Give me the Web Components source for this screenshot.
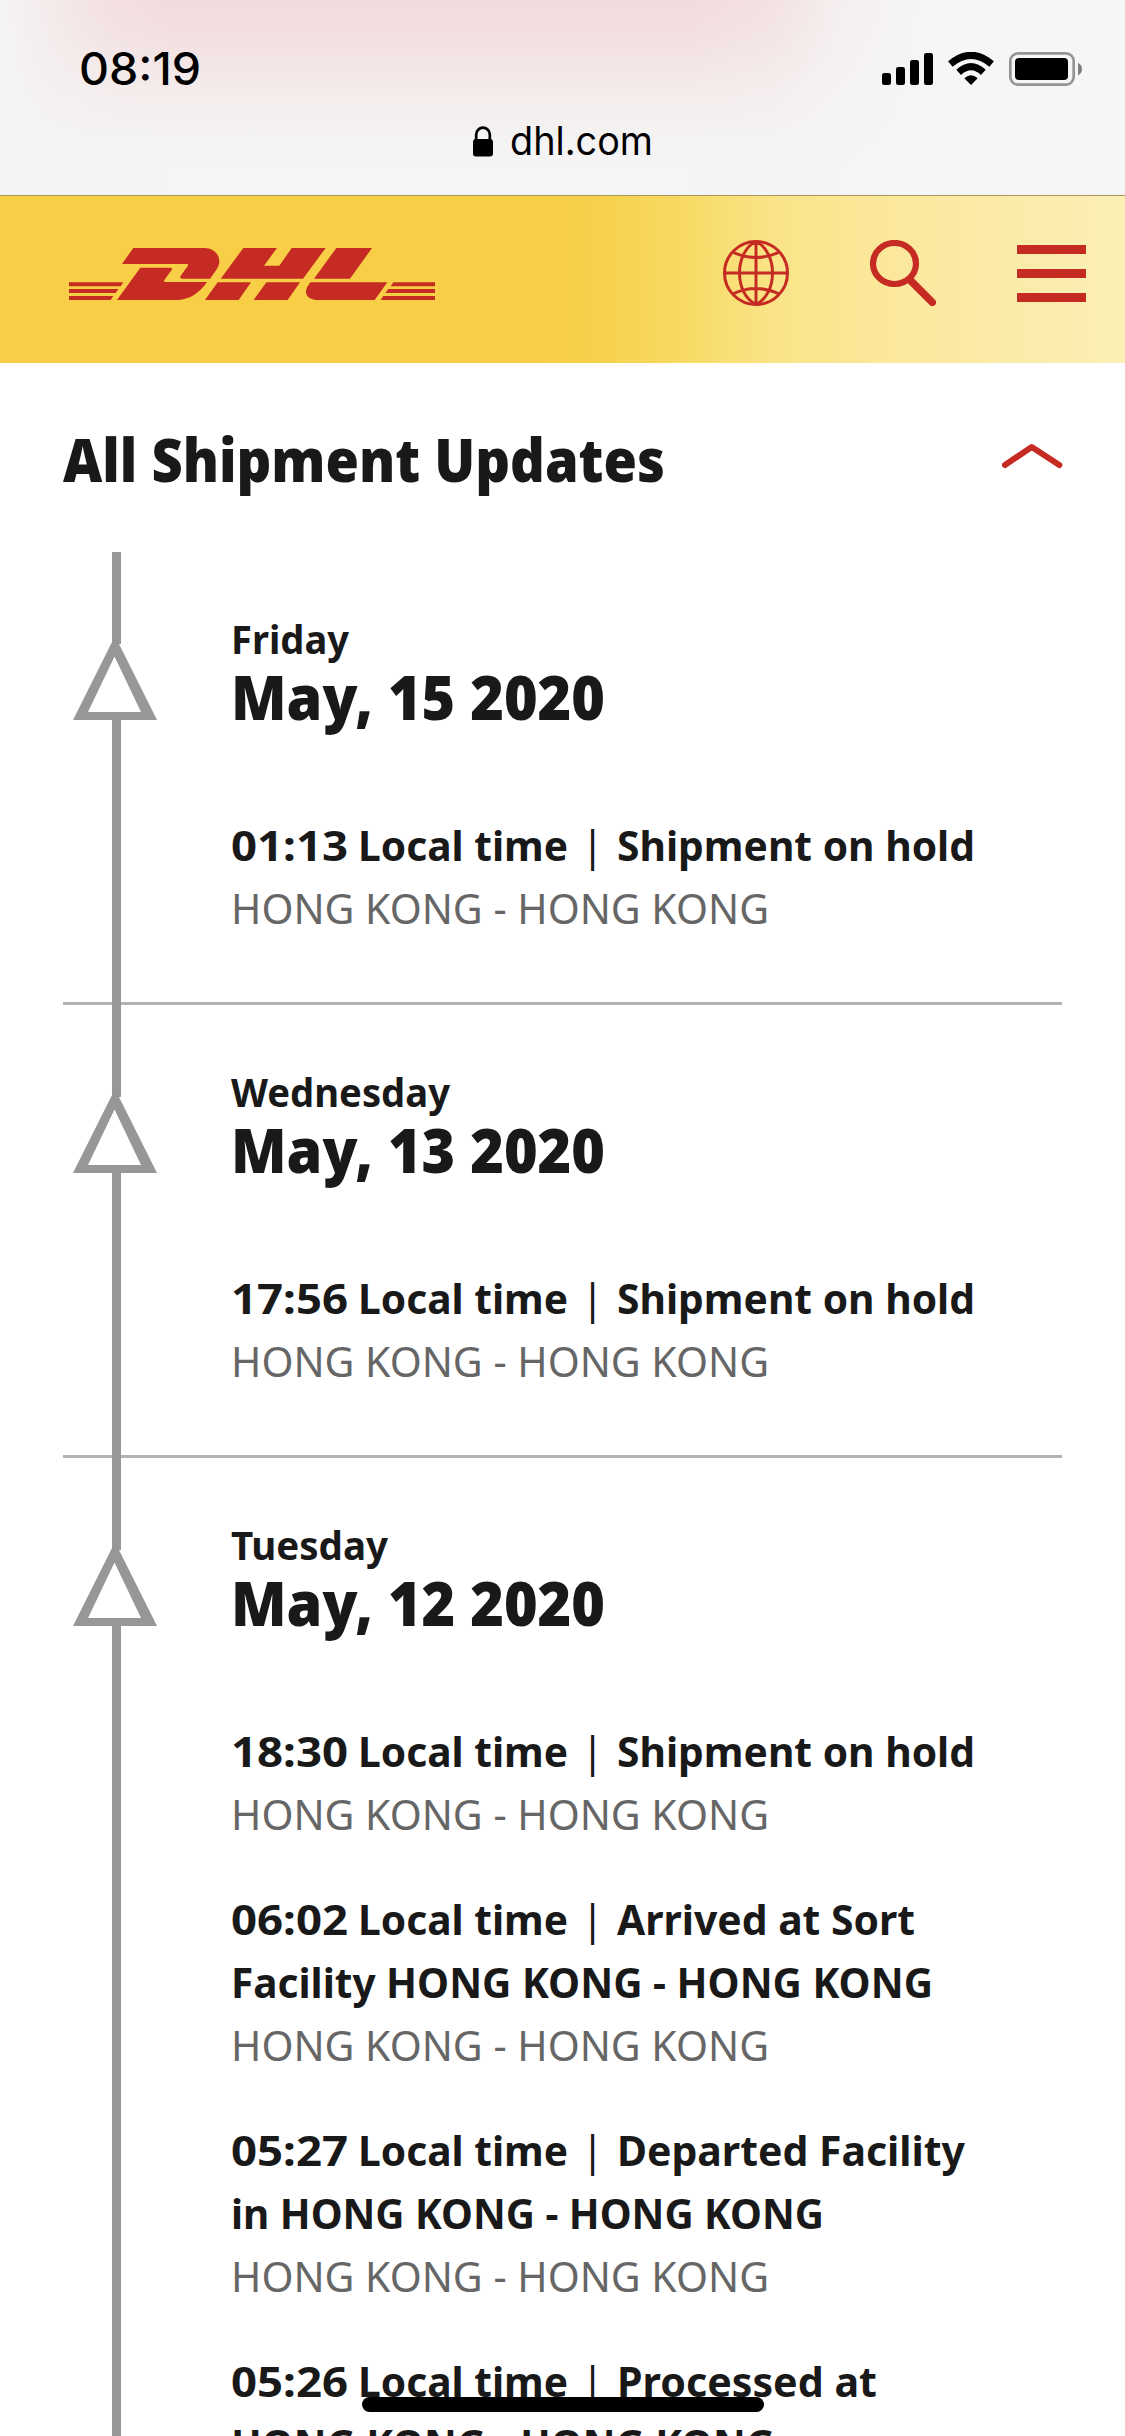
<!DOCTYPE html>
<html lang="en">
<head>
<meta charset="utf-8">
<title>DHL Tracking</title>
<style>
html,body{margin:0;padding:0;background:#fff}
body{width:1125px;height:2436px;overflow:hidden;font-family:"Noto Sans","Open Sans",sans-serif;color:#191919}
</style>
</head>
<body>
<tracking-page></tracking-page>
<script>
const define = (name, html, setup) => customElements.define(name, class extends HTMLElement {
  constructor() {
    super();
    this.attachShadow({ mode: 'open' }).innerHTML = html;
  }
  connectedCallback() { if (setup) setup(this); }
});

// One line of text condensed horizontally to the width in its "w" attribute.
define('fit-text', `<style>
:host{display:block;white-space:pre}
span{display:inline-block;transform-origin:0 50%}
</style><span></span>`, el => {
  const span = el.shadowRoot.querySelector('span');
  span.textContent = el.getAttribute('text');
  const w = +el.getAttribute('w');
  el.style.width = w + 'px';
  span.style.transform = `scaleX(${w / span.getBoundingClientRect().width})`;
});

define('status-icons', `<style>:host{display:block}svg{display:block}</style>
<svg width="201" height="34" viewBox="66 66 603 102">
<g fill="#000"><rect x="66" y="129" width="27" height="36" rx="7"/><rect x="108" y="111" width="27" height="54" rx="7"/><rect x="150" y="90" width="27" height="75" rx="7"/><rect x="192" y="69" width="27" height="96" rx="7"/>
<path d="M333 165L313 145Q333 126 353 145Z"/></g>
<g fill="none" stroke="#000" stroke-width="21"><path d="M296 127Q333 93 370 127" /><path d="M271 102Q333 50 395 102"/></g>
<rect x="451" y="70" width="190" height="94" rx="23" fill="none" stroke="#959595" stroke-width="8"/>
<rect x="465" y="84" width="159" height="66" rx="12"/>
<path d="M654 98Q666 104 666 117T654 136Z" fill="#808080"/></svg>`);

define('browser-bar', `<style>
:host{display:block;height:196px;border-bottom:1px solid #a59659;box-sizing:border-box;
background:linear-gradient(90deg,#f5f4f4 0,rgba(245,243,243,.65) 50px,rgba(245,243,243,.2) 110px,rgba(245,243,243,0) 170px,rgba(245,244,244,0) 690px,rgba(245,244,244,.25) 770px,rgba(246,245,245,.75) 840px,#f6f6f6 930px),linear-gradient(#f3dbdd 0,#f3dfe0 30px,#f4e6e6 65px,#f5eded 100px,#f4f1f1 130px,#f6f5f6 165px);
font-family:Inter,"Liberation Sans",sans-serif;color:#000}
.top{display:flex;justify-content:space-between;align-items:flex-start;padding:42px 42px 0 79px}
.time{font-size:45px;line-height:54px;font-weight:500}
status-icons{margin-top:10px}
.url{display:flex;justify-content:center;align-items:center;padding:21px 0 0;height:48px;font-size:39px;line-height:48px}
.url svg{margin-right:16px}
</style>
<div class="top"><fit-text class="time" text="08:19" w="122"></fit-text><status-icons></status-icons></div>
<div class="url"><svg width="22" height="31" viewBox="0 0 22 31"><path d="M4.200 14V8.500a6.800 6.800 0 0 1 13.600 0V14" fill="none" stroke="#000" stroke-width="2.700"/><rect x="1" y="13" width="20" height="17.500" rx="3"/></svg><fit-text text="dhl.com" w="143"></fit-text></div>`);

define('dhl-logo', `<style>:host{display:block}svg{display:block}</style>
<svg width="366" height="52" viewBox="57 174 1098 156" fill="#c52b22">
<path d="M250 174H463C490 174 508 192 508 215C508 228 499 240 480 266H397Q387 266 392 257L413 229Q417 222 411 222H216Z"/>
<path d="M271 233H361Q369 233 365 240L343 270Q340 276 347 276H471C450 306 422 330 378 330H201Z"/>
<path d="M580 174H681L642 227H688L725 174H827L759 266H512Z"/>
<path d="M503 277H603L566 330H465ZM649 277H750L713 330H611Z"/>
<path d="M859 174H966L900 266H792Z"/>
<path d="M781 277H1012L974 330H806C770 330 760 308 774 287Z"/>
<path d="M57 277H220L212 289H57ZM57 297H205L197 309H57ZM57 318H190L182 330H57ZM1030 277H1155V289H1022ZM1015 297H1155V309H1006ZM1000 318H1155V330H992Z"/>
</svg>`);

define('site-header', `<style>
:host{display:flex;height:167px;box-sizing:border-box;padding:44px 39px 0 69px;justify-content:space-between;align-items:flex-start;
background:linear-gradient(90deg,#f8ce46 0,#f8ce46 550px,#f6d24e 610px,#f8db66 690px,#fae48a 780px,#fbe89b 890px,#fcefb7 1125px)}
dhl-logo{margin-top:8px}
nav{display:flex;align-items:flex-start}
svg{display:block}
.search{margin-left:81px}.menu{margin:5px 0 0 81px}
</style>
<dhl-logo></dhl-logo>
<nav>
<svg width="66" height="66" viewBox="0 0 66 66" fill="none" stroke="#c52b22" stroke-width="3"><circle cx="33" cy="33" r="31.500"/><path d="M33 1V65M1 33H65M33 1.500C11 12 11 54 33 64.500C55 54 55 12 33 1.500M9.500 12Q33 23 56.500 12M9.500 54Q33 43 56.500 54"/></svg>
<svg class="search" width="66" height="66" viewBox="0 0 66 66" fill="none" stroke="#c52b22"><ellipse cx="24.500" cy="23.500" rx="21.500" ry="20.500" stroke-width="6.200"/><path d="M40 40L62.300 62.300" stroke-width="7.500" stroke-linecap="round"/></svg>
<svg class="menu" width="69" height="57" fill="#c52b22"><path d="M0 0H69V9H0ZM0 24H69V33H0ZM0 48H69V57H0Z"/></svg>
</nav>`);

define('updates-heading', `<style>
:host{display:flex;justify-content:space-between;height:189px;box-sizing:border-box;padding:60px 62px 0 63px}
fit-text{font-size:61px;line-height:72px;font-weight:900}
svg{display:block;margin-top:20px}
</style><fit-text text="All Shipment Updates" w="602"></fit-text>
<svg width="62" height="26" viewBox="0 0 62 26"><path d="M4 22L30.700 4L58.300 22" fill="none" stroke="#c52b22" stroke-width="6" stroke-linecap="round" stroke-linejoin="round"/></svg>`);

define('shipment-event', `<style>
:host{display:block;font-size:42px;line-height:63px;font-weight:700}
.line{display:flex}
.local{margin-left:10px}
.pipe{width:49px;text-align:center;font-weight:400}
.place{color:#666;font-weight:400}
</style><div class="line"><fit-text class="time"></fit-text><fit-text class="local" text="Local time" w="210"></fit-text><span class="pipe">|</span><fit-text class="status"></fit-text></div><slot></slot><fit-text class="place" text="HONG KONG - HONG KONG" w="538"></fit-text>`, el => {
  const root = el.shadowRoot;
  const set = (sel, attrs) => {
    const old = root.querySelector(sel), n = document.createElement('fit-text');
    n.className = old.className;
    for (const k in attrs) n.setAttribute(k, attrs[k]);
    old.replaceWith(n);
  };
  set('.time', { text: el.getAttribute('time'), w: 117 });
  set('.status', { text: el.getAttribute('status'), w: el.getAttribute('w') });
});

define('shipment-day', `<style>
:host{display:flex;box-sizing:border-box;margin:0 63px;padding-left:10px;border-bottom:3px solid #b2b2b2}
.rail{width:84px;display:flex;flex-direction:column;margin-bottom:-3px}
.rail i{display:block;width:9px;margin-left:39px;background:#979797}
.rail i:first-child{height:92px}.rail i:last-child{flex:1}
.rail svg{display:block;overflow:visible}
.body{margin-left:74px;padding:66px 0 63px}
.day{font-size:39px;line-height:42px;font-weight:700}
.date{font-size:62px;line-height:66px;font-weight:900;margin:3px 0 84px}
.events{display:flex;flex-direction:column;gap:42px}
</style>
<div class="rail"><i></i><svg width="84" height="76"><path d="M0 76L38 0Q42 -8 46 0L84 76ZM41.500 12.500L15 68H68Z" fill="#979797" fill-rule="evenodd"/></svg><i></i></div>
<div class="body"><div class="day"></div><div class="date"></div><div class="events"><slot></slot></div></div>`, el => {
  const fit = (sel, text, w) => {
    const n = document.createElement('fit-text');
    n.setAttribute('text', text);
    n.setAttribute('w', w);
    el.shadowRoot.querySelector(sel).replaceChildren(n);
  };
  fit('.day', el.getAttribute('day'), el.getAttribute('w'));
  fit('.date', el.getAttribute('date'), 374);
});

define('home-indicator', `<style>:host{display:block;position:absolute;left:362px;top:2397px;width:402px;height:15px;border-radius:8px;background:#000}</style>`);

define('tracking-page', `<style>:host{display:block;width:1125px;height:2436px;overflow:hidden;position:relative;background:#fff}</style>
<browser-bar></browser-bar><site-header></site-header><updates-heading></updates-heading>
<shipment-day day="Friday" date="May, 15 2020" w="118">
<shipment-event time="01:13" status="Shipment on hold" w="358"></shipment-event></shipment-day>
<shipment-day day="Wednesday" date="May, 13 2020" w="219">
<shipment-event time="17:56" status="Shipment on hold" w="358"></shipment-event></shipment-day>
<shipment-day day="Tuesday" date="May, 12 2020" w="157">
<shipment-event time="18:30" status="Shipment on hold" w="358"></shipment-event>
<shipment-event time="06:02" status="Arrived at Sort" w="298"><fit-text text="Facility HONG KONG - HONG KONG" w="702"></fit-text></shipment-event>
<shipment-event time="05:27" status="Departed Facility" w="348"><fit-text text="in HONG KONG - HONG KONG" w="593"></fit-text></shipment-event>
<shipment-event time="05:26" status="Processed at" w="260"><fit-text text="HONG KONG - HONG KONG" w="544"></fit-text></shipment-event>
</shipment-day>
<home-indicator></home-indicator>`);
</script>
</body>
</html>
